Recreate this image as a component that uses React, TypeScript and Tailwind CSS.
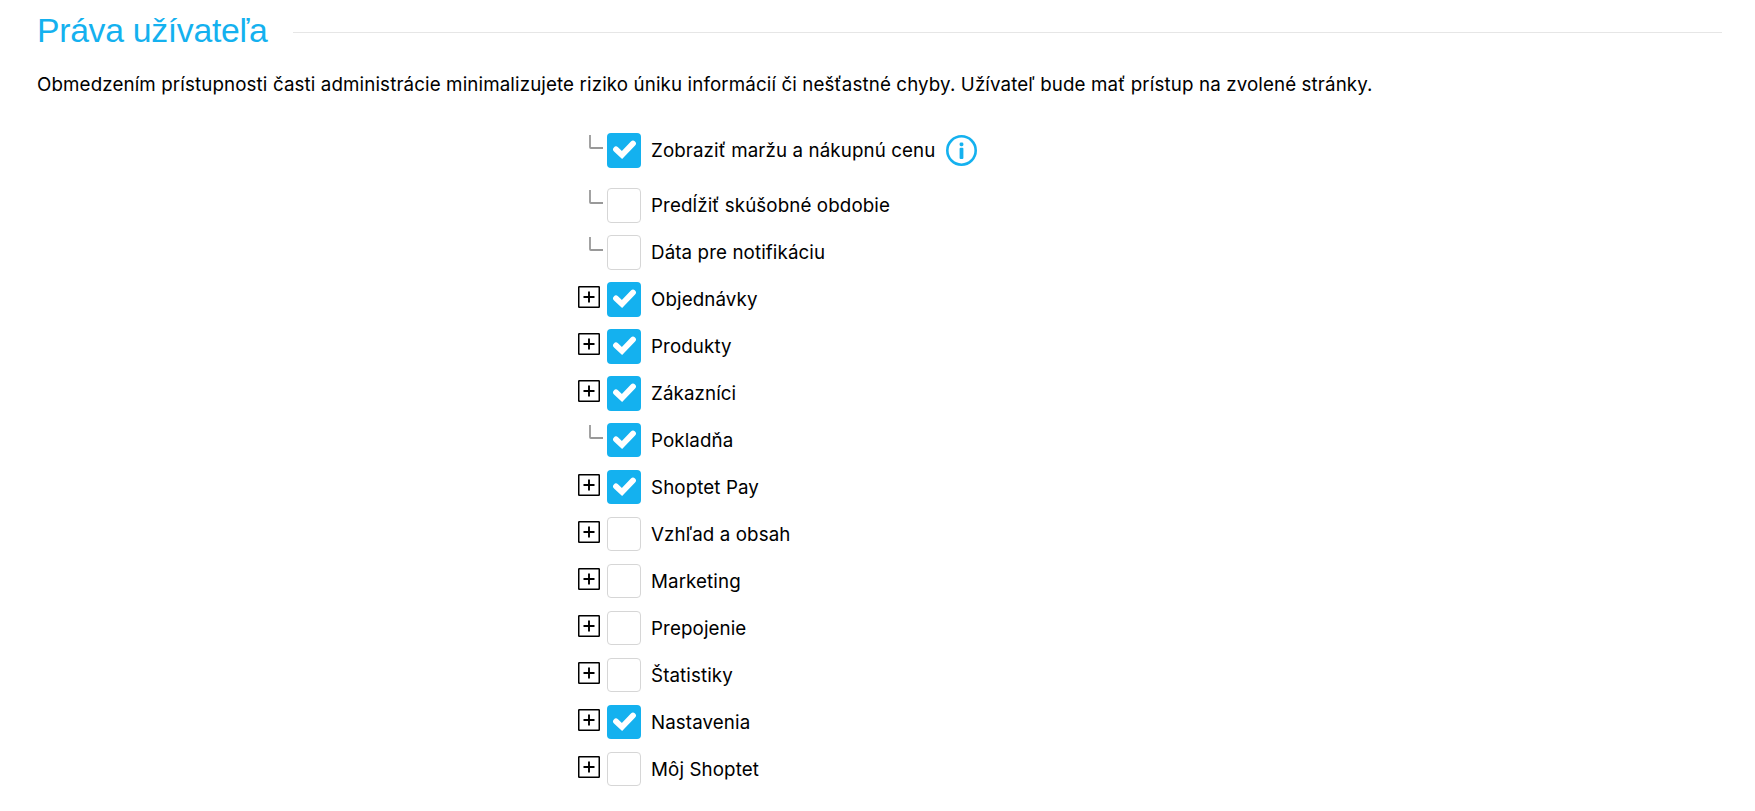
import React from 'react';

interface Permission {
  id: number;
  title: string;
  checked: boolean;
  expandable: boolean;
  hint?: boolean;
}

const permissions: Permission[] = [
  { id: 1, title: 'Zobraziť maržu a nákupnú cenu', checked: true, expandable: false, hint: true },
  { id: 2, title: 'Predĺžiť skúšobné obdobie', checked: false, expandable: false },
  { id: 3, title: 'Dáta pre notifikáciu', checked: false, expandable: false },
  { id: 4, title: 'Objednávky', checked: true, expandable: true },
  { id: 5, title: 'Produkty', checked: true, expandable: true },
  { id: 6, title: 'Zákazníci', checked: true, expandable: true },
  { id: 7, title: 'Pokladňa', checked: true, expandable: false },
  { id: 8, title: 'Shoptet Pay', checked: true, expandable: true },
  { id: 9, title: 'Vzhľad a obsah', checked: false, expandable: true },
  { id: 10, title: 'Marketing', checked: false, expandable: true },
  { id: 11, title: 'Prepojenie', checked: false, expandable: true },
  { id: 12, title: 'Štatistiky', checked: false, expandable: true },
  { id: 13, title: 'Nastavenia', checked: true, expandable: true },
  { id: 14, title: 'Môj Shoptet', checked: false, expandable: true },
];

function ExpandIcon() {
  return (
    <svg className="mt-1 block h-[22px] w-[22px]" viewBox="0 0 22 22" fill="none">
      <rect x="0.75" y="0.75" width="20.5" height="20.5" rx="0.5" stroke="#000" strokeWidth="1.5" />
      <path d="M5.5 11h11M11 5.5v11" stroke="#000" strokeWidth="1.9" />
    </svg>
  );
}

function BranchIcon() {
  return (
    <svg className="mt-0.5 ml-[11px] block h-[14px] w-[14px]" viewBox="0 0 14 14" fill="none">
      <path d="M1 0v12.2q0 .8.8.8H14" stroke="#999" strokeWidth="1.8" />
    </svg>
  );
}

function Checkbox({ checked }: { checked: boolean }) {
  if (!checked) {
    return <span className="block h-[34.4px] w-[34px] rounded-[4px] border border-[#d6d6d6] bg-white" />;
  }

  return (
    <span className="block h-[34.4px] w-[34px] rounded-[4px] bg-[#14b1ef]">
      <svg className="block h-[34px] w-[34px]" viewBox="0 0 34 34" fill="none">
        <path
          d="M9 16.4l6 5.6L26 10.6"
          stroke="#fff"
          strokeWidth="5.8"
          strokeLinecap="round"
        />
      </svg>
    </span>
  );
}

function InfoIcon() {
  return (
    <svg className="ml-[11px] block h-[31px] w-[31px]" viewBox="0 0 31 31" fill="none">
      <circle cx="15.5" cy="15.5" r="14.2" stroke="#14b1ef" strokeWidth="2.6" />
      <rect x="13.6" y="7.6" width="3.8" height="3.6" rx="1.4" fill="#14b1ef" />
      <rect x="13.6" y="12.8" width="3.8" height="11.2" rx="1" fill="#14b1ef" />
    </svg>
  );
}

function PermissionRow({ permission }: { permission: Permission }) {
  return (
    <li className={permission.hint ? 'flex h-[55px]' : 'flex h-[46.95px]'}>
      <div className="w-[29px] shrink-0">
        {permission.expandable ? <ExpandIcon /> : <BranchIcon />}
      </div>
      <label className="flex h-[34.4px] items-center">
        <Checkbox checked={permission.checked} />
        <span className="ml-[10px] whitespace-nowrap pt-[1.6px] tracking-[0.1px]">
          {permission.title}
        </span>
        {permission.hint && <InfoIcon />}
      </label>
    </li>
  );
}

function App() {
  return (
    <main className="h-[811px] overflow-hidden bg-white pl-[37px] pr-[33px] font-['Inter',sans-serif] text-[18.75px] text-black">
      <div className="flex items-center pt-[9px]">
        <h1 className="w-[256px] whitespace-nowrap pb-1 font-['Liberation_Sans',sans-serif] text-[33.75px] leading-[42px] tracking-[-0.3px] text-[#14b1ef]">
          Práva užívateľa
        </h1>
        <div className="h-px grow bg-[#e6e6e6]" />
      </div>
      <p className="mt-[16px] whitespace-nowrap leading-7 tracking-[0.115px]">
        Obmedzením prístupnosti časti administrácie minimalizujete riziko úniku informácií či
        nešťastné chyby. Užívateľ bude mať prístup na zvolené stránky.
      </p>
      <ul className="ml-[541px] mt-[34.4px] flex flex-col">
        {permissions.map((item) => (
          <PermissionRow key={item.id} permission={item} />
        ))}
      </ul>
    </main>
  );
}

export default App;
